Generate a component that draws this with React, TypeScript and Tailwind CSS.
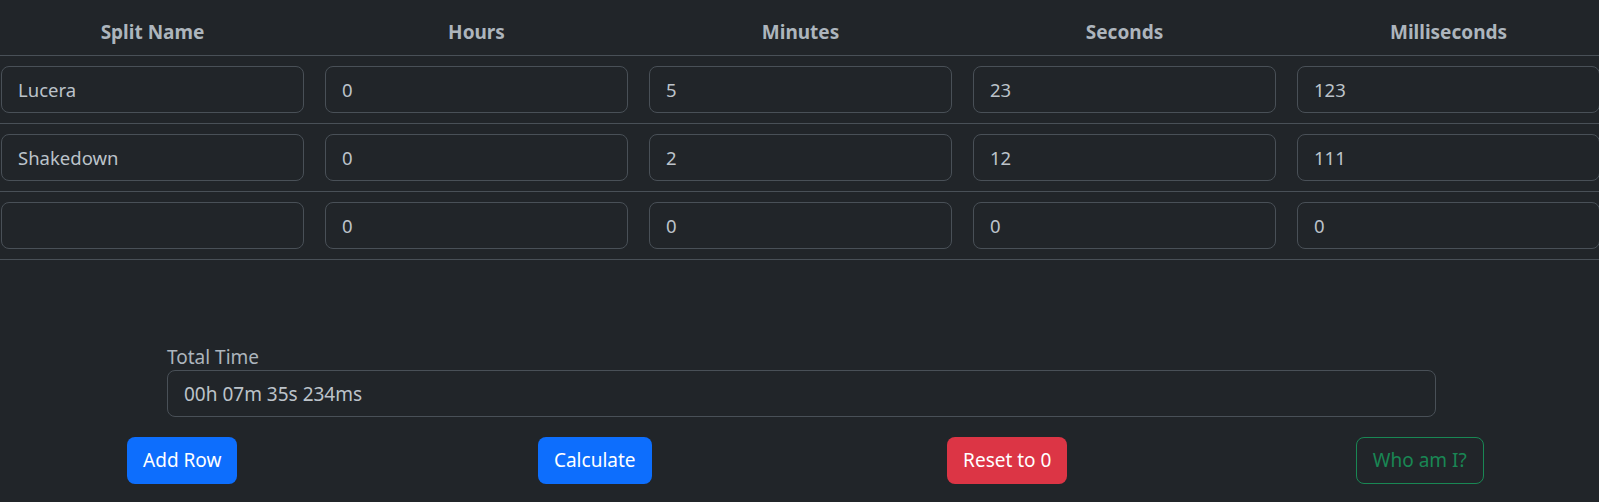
import { useState } from "react";

type Split = { name: string; h: string; m: string; s: string; ms: string };

const initialSplits: Split[] = [
  { name: "Lucera", h: "0", m: "5", s: "23", ms: "123" },
  { name: "Shakedown", h: "0", m: "2", s: "12", ms: "111" },
  { name: "", h: "0", m: "0", s: "0", ms: "0" },
];

const columns = ["Split Name", "Hours", "Minutes", "Seconds", "Milliseconds"];

const inputCls =
  "block w-[303px] h-[47px] px-4 rounded-lg border border-[#495057] bg-[#212529] text-[#bcc3ca] text-[18.5px] outline-none";

const btnCls = "h-[47px] px-4 rounded-lg text-[19px]";

export default function App() {
  const [splits] = useState(initialSplits);

  return (
    <div
      className="w-[1599px] h-[502px] overflow-hidden bg-[#212529] text-[#dee2e6]"
      style={{ fontFamily: '"Noto Sans", "Open Sans", sans-serif' }}
    >
      <div className="w-[1620px]">
        <div className="flex h-[56px] border-b border-[#495057]">
          {columns.map((c) => (
            <div
              key={c}
              className="w-[324px] pl-[1px] pr-[20px] flex items-center justify-center pt-[9px]"
            >
              <span className="w-[303px] text-center font-bold text-[19px] text-[#adb5bd]">{c}</span>
            </div>
          ))}
        </div>
        {splits.map((row, i) => (
          <div key={i} className="flex pt-[10px] pb-[10px] border-b border-[#495057]">
            {[row.name, row.h, row.m, row.s, row.ms].map((v, j) => (
              <div key={j} className="w-[324px] pl-[1px] pr-[20px]">
                <input className={inputCls} defaultValue={v} readOnly />
              </div>
            ))}
          </div>
        ))}
      </div>

      <div className="ml-[167px] w-[1269px] mt-[84px]">
        <label className="block h-[26px] leading-[26px] text-[19px] text-[#adb5bd]">Total Time</label>
        <input
          className="block w-full h-[47px] px-4 rounded-lg border border-[#495057] bg-[#212529] text-[#bcc3ca] text-[19px] outline-none"
          defaultValue="00h 07m 35s 234ms"
          readOnly
        />
      </div>

      <div className="ml-[-24px] mt-[20px] grid grid-cols-[repeat(4,412.5px)] justify-items-center">
        <button className={`${btnCls} bg-[#0d6efd] text-white`}>Add Row</button>
        <button className={`${btnCls} bg-[#0d6efd] text-white`}>Calculate</button>
        <button className={`${btnCls} bg-[#dc3545] text-white`}>Reset to 0</button>
        <button className={`${btnCls} border border-[#198754] text-[#198754]`}>Who am I?</button>
      </div>
    </div>
  );
}
